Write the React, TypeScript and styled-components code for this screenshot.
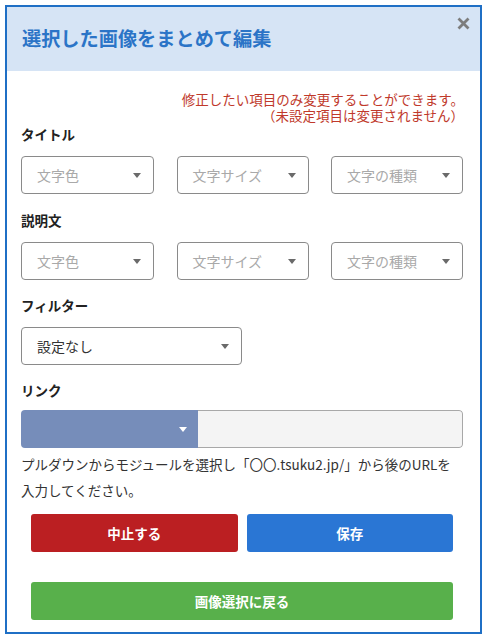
import React from "react";
import styled, { createGlobalStyle } from "styled-components";

const Global = createGlobalStyle`
  html, body { margin: 0; padding: 0; background: #ffffff; }
  body { font-family: "Noto Sans CJK JP", "Noto Sans", sans-serif; color: #333; }
  * { box-sizing: border-box; }
`;

const Modal = styled.div`
  position: relative;
  margin: 5px 0 0 5px;
  width: 477px;
  height: 629px;
  border: 2px solid #1f6fc5;
  background: #fff;
  display: flex;
  flex-direction: column;
`;

const Header = styled.div`
  height: 64px;
  background: #d6e4f5;
  display: flex;
  align-items: center;
  padding-left: 15px;
  padding-bottom: 3px;
`;

const Title = styled.h1`
  margin: 0;
  font-size: 19.2px;
  font-weight: 700;
  color: #2b74c7;
`;

const Close = styled.button`
  position: absolute;
  top: 8px;
  right: 9px;
  width: 16px;
  height: 16px;
  padding: 0;
  border: none;
  background: none;
  display: flex;
  align-items: center;
  justify-content: center;
`;

const Body = styled.div`
  padding: 20px 17px 0 14px;
  display: flex;
  flex-direction: column;
`;

const Note = styled.p`
  margin: 0 -1px 0 0;
  font-size: 13.5px;
  line-height: 16px;
  color: #c0392b;
  text-align: right;
`;

const Label = styled.div<{ $top: number }>`
  margin-top: ${(p) => p.$top}px;
  font-size: 13.5px;
  font-weight: 700;
  line-height: 20px;
  color: #222;
`;

const Row = styled.div<{ $cols?: string }>`
  margin-top: 12px;
  display: grid;
  grid-template-columns: ${(p) => p.$cols ?? "133px 132px 132px"};
  justify-content: space-between;
`;

const Select = styled.div`
  height: 38px;
  border: 1px solid #8a8a8a;
  border-radius: 4px;
  display: flex;
  align-items: center;
  justify-content: space-between;
  padding: 0 12px 0 15px;
  background: #fff;
`;

const SelectText = styled.span<{ $placeholder?: boolean }>`
  font-size: 14px;
  color: ${(p) => (p.$placeholder ? "#a9a9a9" : "#333")};
`;

const Arrow = styled.span<{ $color?: string }>`
  width: 0;
  height: 0;
  margin-top: 1px;
  border-left: 4.5px solid transparent;
  border-right: 4.5px solid transparent;
  border-top: 5px solid ${(p) => p.$color ?? "#6a6a6a"};
`;

const LinkRow = styled.div`
  margin-top: 10px;
  height: 38px;
  display: flex;
  border-radius: 4px;
  overflow: hidden;
`;

const LinkSelect = styled.div`
  width: 177px;
  background: #768dba;
  display: flex;
  align-items: center;
  justify-content: flex-end;
  padding-right: 11px;
`;

const LinkInput = styled.div`
  flex: 1;
  background: #f4f4f4;
  border: 1px solid #a8a8a8;
  border-left: none;
  border-radius: 0 4px 4px 0;
`;

const Help = styled.p`
  margin: 3px 0 0 0;
  font-size: 13.5px;
  line-height: 26px;
  color: #333;
`;

const Buttons = styled.div`
  margin: 11px 10px 0 10px;
  display: grid;
  grid-template-columns: 1fr 1fr;
  gap: 9px;
`;

const Btn = styled.button<{ $bg: string }>`
  height: 38px;
  border: none;
  border-radius: 3px;
  background: ${(p) => p.$bg};
  color: #fff;
  font-family: inherit;
  font-size: 13.5px;
  font-weight: 700;
  display: flex;
  align-items: center;
  justify-content: center;
  padding: 0;
`;

const Back = styled(Btn)`
  margin: 30px 10px 0 10px;
`;

const fontSel = ["文字色", "文字サイズ", "文字の種類"];

export default function App() {
  return (
    <>
      <Global />
      <Modal>
        <Header>
          <Title>選択した画像をまとめて編集</Title>
        </Header>
        <Close aria-label="close">
          <svg width="13" height="13" viewBox="0 0 13 13">
            <path d="M1.5 1.5 L11.5 11.5 M11.5 1.5 L1.5 11.5" stroke="#7d7d7d" strokeWidth="2.8" strokeLinecap="butt" />
          </svg>
        </Close>
        <Body>
          <Note>
            修正したい項目のみ変更することができます。
            <br />
            （未設定項目は変更されません）
          </Note>
          <Label $top={1}>タイトル</Label>
          <Row>
            {fontSel.map((t) => (
              <Select key={t}>
                <SelectText $placeholder>{t}</SelectText>
                <Arrow />
              </Select>
            ))}
          </Row>
          <Label $top={16}>説明文</Label>
          <Row>
            {fontSel.map((t) => (
              <Select key={t}>
                <SelectText $placeholder>{t}</SelectText>
                <Arrow />
              </Select>
            ))}
          </Row>
          <Label $top={15}>フィルター</Label>
          <Row $cols="221px">
            <Select>
              <SelectText>設定なし</SelectText>
              <Arrow />
            </Select>
          </Row>
          <Label $top={15}>リンク</Label>
          <LinkRow>
            <LinkSelect>
              <Arrow $color="#fff" />
            </LinkSelect>
            <LinkInput />
          </LinkRow>
          <Help>
            プルダウンからモジュールを選択し「〇〇.tsuku2.jp/」から後のURLを
            <br />
            入力してください。
          </Help>
          <Buttons>
            <Btn $bg="#bb1f22">中止する</Btn>
            <Btn $bg="#2a76d4">保存</Btn>
          </Buttons>
          <Back $bg="#58b04b">画像選択に戻る</Back>
        </Body>
      </Modal>
    </>
  );
}
